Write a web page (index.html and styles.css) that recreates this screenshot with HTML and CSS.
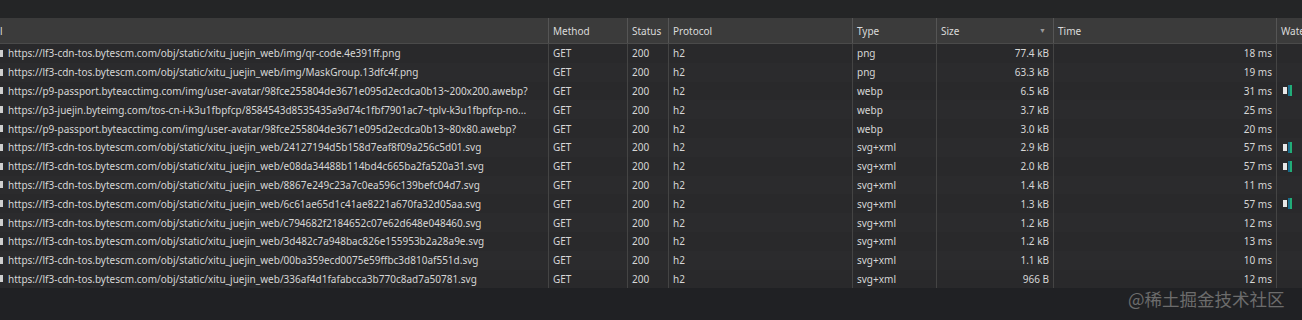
FILE: index.html
```html
<!DOCTYPE html>
<html>
<head>
<meta charset="utf-8">
<link rel="stylesheet" href="styles.css">
</head>
<body>
<div class="topbar"></div>
<div class="grid">
  <div class="hcell c-name"><span class="hname">l</span></div>
  <div class="hcell">Method</div>
  <div class="hcell">Status</div>
  <div class="hcell">Protocol</div>
  <div class="hcell">Type</div>
  <div class="hcell sort">Size<span class="tri">▼</span></div>
  <div class="hcell">Time</div>
  <div class="hcell">Waterfall</div>
</div>
<div class="rows" id="rows"></div>
<div class="watermark">@稀土掘金技术社区</div>
<script src="app.js"></script>
</body>
</html>
```
FILE: app.js
```js
const base = "https://lf3-cdn-tos.bytescm.com/obj/static/xitu_juejin_web/";
const data = [
  [base + "img/qr-code.4e391ff.png", "png", "77.4 kB", "18 ms", false],
  [base + "img/MaskGroup.13dfc4f.png", "png", "63.3 kB", "19 ms", false],
  ["https://p9-passport.byteacctimg.com/img/user-avatar/98fce255804de3671e095d2ecdca0b13~200x200.awebp?", "webp", "6.5 kB", "31 ms", true],
  ["https://p3-juejin.byteimg.com/tos-cn-i-k3u1fbpfcp/8584543d8535435a9d74c1fbf7901ac7~tplv-k3u1fbpfcp-no...", "webp", "3.7 kB", "25 ms", false],
  ["https://p9-passport.byteacctimg.com/img/user-avatar/98fce255804de3671e095d2ecdca0b13~80x80.awebp?", "webp", "3.0 kB", "20 ms", false],
  [base + "24127194d5b158d7eaf8f09a256c5d01.svg", "svg+xml", "2.9 kB", "57 ms", true],
  [base + "e08da34488b114bd4c665ba2fa520a31.svg", "svg+xml", "2.0 kB", "57 ms", true],
  [base + "8867e249c23a7c0ea596c139befc04d7.svg", "svg+xml", "1.4 kB", "11 ms", false],
  [base + "6c61ae65d1c41ae8221a670fa32d05aa.svg", "svg+xml", "1.3 kB", "57 ms", true],
  [base + "c794682f2184652c07e62d648e048460.svg", "svg+xml", "1.2 kB", "12 ms", false],
  [base + "3d482c7a948bac826e155953b2a28a9e.svg", "svg+xml", "1.2 kB", "13 ms", false],
  [base + "00ba359ecd0075e59ffbc3d810af551d.svg", "svg+xml", "1.1 kB", "10 ms", false],
  [base + "336af4d1fafabcca3b770c8ad7a50781.svg", "svg+xml", "966 B", "12 ms", false]
];
const rows = document.getElementById("rows");
data.forEach((d, i) => {
  const r = document.createElement("div");
  r.className = "row" + (i % 2 ? " odd" : "");
  r.innerHTML =
    '<div class="cell c-name"><span class="ficon"></span><span class="url">' + d[0] + '</span></div>' +
    '<div class="cell">GET</div>' +
    '<div class="cell">200</div>' +
    '<div class="cell">h2</div>' +
    '<div class="cell">' + d[1] + '</div>' +
    '<div class="cell num">' + d[2] + '</div>' +
    '<div class="cell num">' + d[3] + '</div>' +
    '<div class="cell wf">' + (d[4] ? '<span class="bar"><span class="b1"></span><span class="b2"></span></span>' : '') + '</div>';
  rows.appendChild(r);
});
```
FILE: styles.css
```css
html, body {
  margin: 0;
  padding: 0;
  background: #202124;
  height: 320px;
  overflow: hidden;
}
body {
  font-family: "Noto Sans", "Open Sans", sans-serif;
  font-size: 10px;
  color: #d6d6d6;
  position: relative;
}
.topbar {
  height: 18px;
  background: #242526;
}
.grid, .row {
  display: grid;
  grid-template-columns: 548px 79px 41px 184px 84px 117px 223px 26px;
  width: 1302px;
  overflow: hidden;
}
.grid {
  height: 26px;
  background: #3b3b3b;
  border-bottom: 1px solid #4a4a4a;
  box-sizing: border-box;
}
.hcell {
  display: flex;
  align-items: center;
  padding: 0 4px;
  border-left: 1px solid #555;
  white-space: nowrap;
  overflow: hidden;
  color: #dadada;
}
.hcell.c-name { border-left: none; padding-left: 0; }
.sort { justify-content: space-between; }
.tri { font-size: 7px; color: #9a9a9a; margin-right: 3px; }
.rows { background: #202124; }
.row {
  height: 18.8px;
  background: #29292b;
}
.row.odd { background: #2b2b2d; }
.cell {
  display: flex;
  align-items: center;
  padding: 0 4px;
  border-left: 1px solid #444;
  white-space: nowrap;
  overflow: hidden;
}
.cell.c-name { border-left: none; padding-left: 0; }
.num { justify-content: flex-end; }
.ficon {
  display: inline-block;
  width: 3px;
  height: 7px;
  background: #cfcfcf;
  margin-right: 5px;
  flex: none;
}
.wf { padding-left: 6px; }
.bar { display: flex; align-items: center; }
.b1 { width: 4px; height: 7px; background: #e8e8e8; }
.b2 { width: 4px; height: 11px; background: linear-gradient(90deg, #1b6f8c 0 40%, #22ad78 40% 100%); margin-left: 1px; }
.watermark {
  position: absolute;
  left: 1128px;
  top: 286px;
  font-family: "Noto Sans CJK SC", sans-serif;
  font-size: 17.5px;
  color: #6c6c6c;
  pointer-events: none;
}
```
